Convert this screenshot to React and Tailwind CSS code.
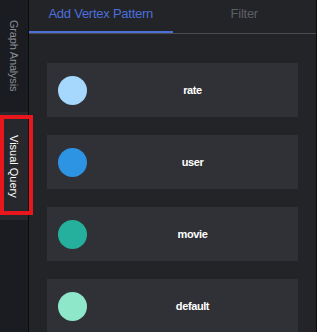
import React from "react";

const items = [
  { label: "rate", color: "bg-[#a6d8fe]" },
  { label: "user", color: "bg-[#2d93e3]" },
  { label: "movie", color: "bg-[#25b09d]" },
  { label: "default", color: "bg-[#8fe7c9]" },
];

export default function App() {
  return (
    <div
      className="relative flex w-[317px] h-[332px] overflow-hidden bg-[#232428]"
      style={{ fontFamily: '"Liberation Sans", Arial, sans-serif' }}
    >
      {/* Sidebar */}
      <div className="w-[29px] shrink-0 bg-[#1b1c22] border-r border-[#0b0b0e] flex flex-col">
        <div className="h-[112px] flex items-center justify-center">
          <span className="[writing-mode:vertical-rl] text-[11px] text-[#8a8d96] tracking-[-0.2px]">
            Graph Analysis
          </span>
        </div>
        <div className="h-[108px] bg-[#27282d] flex items-center justify-center">
          <span className="[writing-mode:vertical-rl] text-[11px] text-white">
            Visual Query
          </span>
        </div>
      </div>

      {/* Main */}
      <div className="flex-1 flex flex-col border-r border-[#0e0e10]">
        <div className="h-[34px] flex border-b border-[#4a4b50]">
          <div className="flex-1 h-[33px] flex items-center justify-center pb-[4px] border-b-2 border-[#4d6fd9] text-[13px] tracking-[-0.25px] text-[#4c6fdc]">
            Add Vertex Pattern
          </div>
          <div className="flex-1 h-[33px] flex items-center justify-center pb-[4px] border-b-2 border-transparent text-[13px] tracking-[-0.25px] text-[#5d5f67]">
            Filter
          </div>
        </div>
        <div className="flex flex-col gap-[18px] px-[18px] pt-[29px]">
          {items.map((it) => (
            <div key={it.label} className="h-[54px] shrink-0 flex items-center bg-[#303136]">
              <div className={`ml-[11px] w-[29px] h-[29px] rounded-full ${it.color}`} />
              <div className="flex-1 text-center text-[11px] font-bold tracking-[-0.4px] text-white">{it.label}</div>
            </div>
          ))}
        </div>
      </div>

      {/* Annotation box */}
      <div className="absolute left-0 top-[115px] w-[33px] h-[100px] border-4 border-[#e8171e]" />
    </div>
  );
}
